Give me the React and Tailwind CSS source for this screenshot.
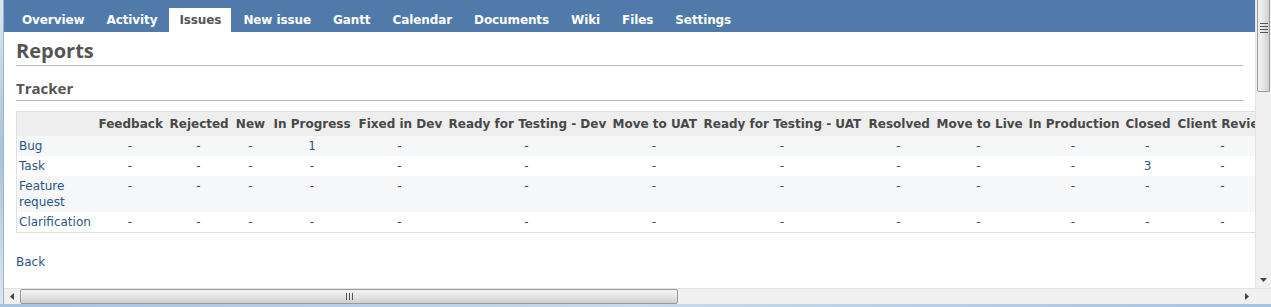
import React from 'react';

const tabs = ['Overview', 'Activity', 'Issues', 'New issue', 'Gantt', 'Calendar', 'Documents', 'Wiki', 'Files', 'Settings'];

// widths measured from the report table
const columns = [
  { name: 'Feedback', w: 'w-[71px]' },
  { name: 'Rejected', w: 'w-[66px]' },
  { name: 'New', w: 'w-[38px]' },
  { name: 'In Progress', w: 'w-[85px]' },
  { name: 'Fixed in Dev', w: 'w-[90px]' },
  { name: 'Ready for Testing - Dev', w: 'w-[164px]' },
  { name: 'Move to UAT', w: 'w-[91px]' },
  { name: 'Ready for Testing - UAT', w: 'w-[165px]' },
  { name: 'Resolved', w: 'w-[68px]' },
  { name: 'Move to Live', w: 'w-[92px]' },
  { name: 'In Production', w: 'w-[97px]' },
  { name: 'Closed', w: 'w-[52px]' },
  { name: 'Client Review', w: 'w-[98px]' },
  { name: 'Total', w: 'w-[50px]' },
];

const rows = [
  { tracker: 'Bug', values: { 'In Progress': 1, Total: 1 } },
  { tracker: 'Task', values: { Closed: 3, Total: 3 } },
  { tracker: 'Feature request', values: {} },
  { tracker: 'Clarification', values: {} },
];

const App = () => {
  return (
    <div className="h-[307px] w-full overflow-hidden bg-white flex flex-col font-['DejaVu_Sans',sans-serif] text-[12px] text-[#484848]">
      <div className="flex flex-1 min-h-0">
        {/* window frame */}
        <div className="w-[4px] bg-gradient-to-b from-[#dce6f1] via-[#a9c2dd] to-[#dce6f1] border-r border-[#9fb3c8]" />

        <div className="flex flex-1 flex-col min-w-0">
          <div className="flex flex-1 min-h-0">
            {/* page */}
            <div className="flex-1 min-w-0 overflow-hidden">
              {/* Main menu */}
              <div className="h-[32px] bg-[#507aaa] flex items-end pl-[8px]">
                {tabs.map((tab) => (
                  <a
                    key={tab}
                    className={`mr-[2px] px-[10px] h-[24px] leading-[25px] font-bold tracking-[-0.1px] whitespace-nowrap ${
                      tab === 'Issues' ? 'bg-white text-[#555]' : 'text-white'
                    }`}
                  >
                    {tab}
                  </a>
                ))}
              </div>

              <div className="pl-[12px] pr-[12px] pt-[7px]">
                <h2 className="font-['Open_Sans',sans-serif] font-bold text-[20px] leading-[24px] text-[#555] pb-[2px] border-b border-[#bbb]">
                  Reports
                </h2>
                <h3 className="mt-[12px] font-['Open_Sans',sans-serif] font-bold text-[15px] leading-[20px] text-[#555] pb-[2px] border-b border-[#bbb]">
                  Tracker
                </h3>

                {/* Report table */}
                <table className="mt-[10px] table-fixed w-[1305px] border-collapse border border-[#e0e0e0]">
                  <thead>
                    <tr className="bg-[#eeeeee]">
                      <th className="w-[78px] h-[24px]"></th>
                      {columns.map((col) => (
                        <th key={col.name} className={`${col.w} h-[24px] px-[4px] font-bold text-center whitespace-nowrap overflow-hidden`}>
                          {col.name}
                        </th>
                      ))}
                    </tr>
                  </thead>
                  <tbody>
                    {rows.map((row, i) => (
                      <tr key={row.tracker} className={i % 2 === 0 ? 'bg-[#f6f7f8]' : 'bg-white'}>
                        <td className="px-[2px] py-[2px] leading-[16px] align-top text-left">
                          <a className="text-[#2a5685]">{row.tracker}</a>
                        </td>
                        {columns.map((col) => (
                          <td key={col.name} className="py-[2px] leading-[16px] align-top text-center">
                            {row.values[col.name] ? (
                              <a className="text-[#2a5685]">{row.values[col.name]}</a>
                            ) : (
                              '-'
                            )}
                          </td>
                        ))}
                      </tr>
                    ))}
                  </tbody>
                </table>

                <p className="mt-[21px] leading-[16px]">
                  <a className="text-[#2a5685]">Back</a>
                </p>
              </div>
            </div>

            {/* vertical scrollbar */}
            <div className="w-[16px] bg-[#f0f0f0] border-l border-[#e3e3e3] flex flex-col">
              <div className="mx-[1px] h-[92px] rounded-b-[2px] border border-t-0 border-[#9a9a9a] bg-gradient-to-r from-[#f3f3f3] via-[#e6e6e6] to-[#cfcfcf] flex flex-col items-center pt-[23px] gap-[2px]">
                <div className="w-[8px] h-[1px] bg-[#555]" />
                <div className="w-[8px] h-[1px] bg-[#555]" />
                <div className="w-[8px] h-[1px] bg-[#555]" />
                <div className="w-[8px] h-[1px] bg-[#555]" />
              </div>
              <div className="flex-1" />
              <div className="h-[17px] flex items-center justify-center">
                <svg width="7" height="4" viewBox="0 0 7 4">
                  <polygon points="0,0 7,0 3.5,4" fill="#444" />
                </svg>
              </div>
            </div>
          </div>

          {/* horizontal scrollbar */}
          <div className="h-[16px] flex bg-[#f0f0f0] border-t border-[#e3e3e3]">
            <div className="w-[16px] flex items-center justify-center">
              <svg width="4" height="7" viewBox="0 0 4 7">
                <polygon points="4,0 4,7 0,3.5" fill="#444" />
              </svg>
            </div>
            <div className="w-[658px] rounded-[2px] border border-[#9a9a9a] bg-gradient-to-b from-[#f3f3f3] via-[#e4e4e4] to-[#cfcfcf] flex items-center justify-center gap-[2px]">
              <div className="w-[1px] h-[7px] bg-[#555]" />
              <div className="w-[1px] h-[7px] bg-[#555]" />
              <div className="w-[1px] h-[7px] bg-[#555]" />
            </div>
            <div className="flex-1" />
            <div className="w-[16px] flex items-center justify-center">
              <svg width="4" height="7" viewBox="0 0 4 7">
                <polygon points="0,0 0,7 4,3.5" fill="#444" />
              </svg>
            </div>
            <div className="w-[16px] bg-[#f0f0f0]" />
          </div>
        </div>
      </div>
      {/* bottom frame */}
      <div className="h-[3px] bg-gradient-to-r from-[#a9c2dd] via-[#c8daec] to-[#a9c2dd]" />
    </div>
  );
};

export default App;
